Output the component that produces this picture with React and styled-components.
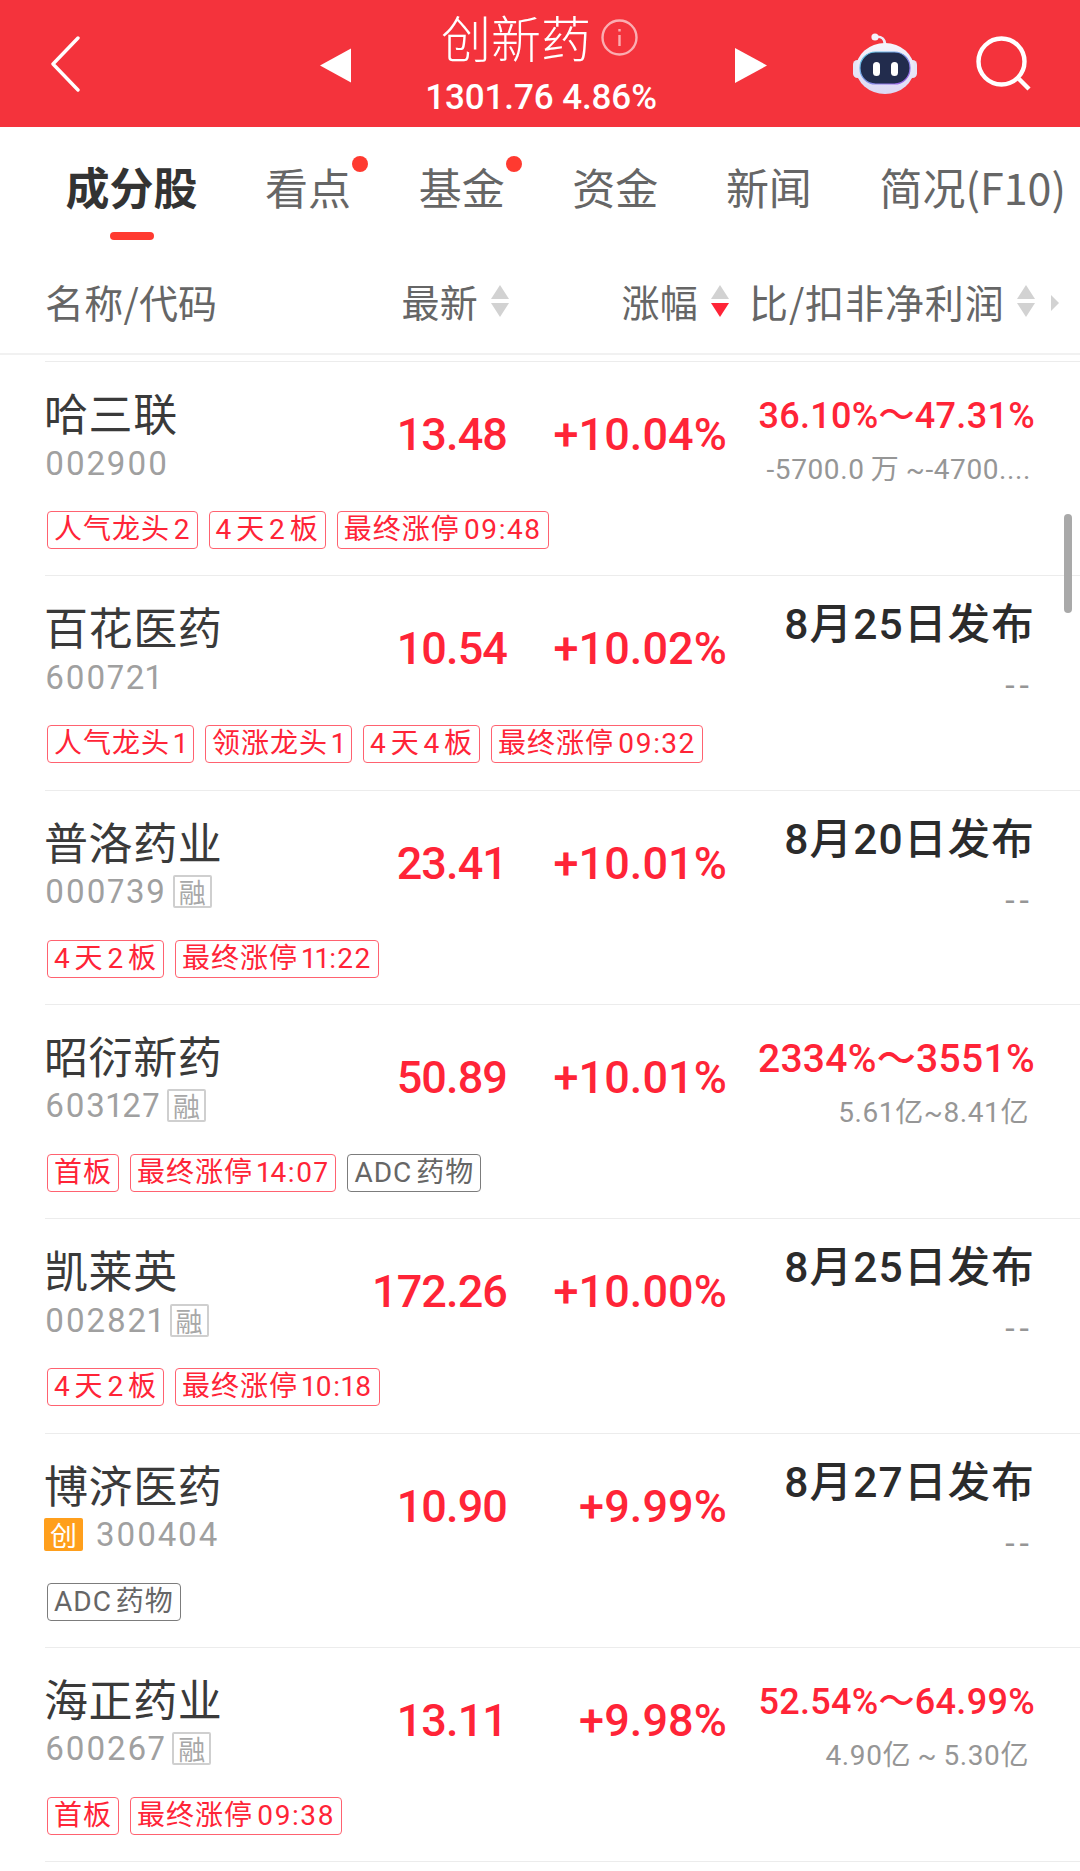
import React from "react";
import styled, { createGlobalStyle } from "styled-components";

const RED = "#ff2437";
const CJK = '"Noto Sans CJK SC", sans-serif';
const NUM = `Roboto, ${CJK}`;

const GlobalStyle = createGlobalStyle`
  html, body {
    margin: 0;
    padding: 0;
    background: #fff;
    font-family: ${CJK};
  }
`;

const Page = styled.div`
  position: relative;
  width: 1080px;
  height: 1871px;
  overflow: hidden;
  background: #fff;
`;

const TopBar = styled.header`
  display: grid;
  grid-template-columns: 320px 31px 384px 32px 85px 66px 57px 56px;
  align-items: center;
  height: 127px;
  background: #f4333c;
  color: #fff;
`;

const BackCell = styled.div`
  display: flex;
  padding-left: 50px;
`;

const TriangleCell = styled.div`
  display: flex;
  margin-top: 4px;
`;

const TitleCell = styled.div`
  display: flex;
  flex-direction: column;
  align-items: center;
`;

const TitleLine = styled.div`
  position: relative;
  margin: -2px 54px 14px 0;
  font-size: 50px;
  line-height: 56px;
  font-weight: 300;
`;

const InfoIcon = styled.svg`
  position: absolute;
  left: 160px;
  top: 11px;
`;

const Quote = styled.div`
  margin-right: 4px;
  font-family: ${NUM};
  font-size: 35px;
  line-height: 40px;
  font-weight: 500;
  letter-spacing: -0.1px;
`;

const Tabs = styled.nav`
  display: flex;
  gap: 67.6px;
  height: 118px;
  padding-left: 65.5px;
  box-sizing: border-box;
`;

const Tab = styled.div`
  position: relative;
  padding-top: 31px;
  font-size: ${(p) => (p.$active ? 44 : 43)}px;
  line-height: 56px;
  white-space: nowrap;
  color: ${(p) => (p.$active ? "#333" : "#666")};
  font-weight: ${(p) => (p.$active ? 700 : 400)};
`;

const TabBar = styled.i`
  position: absolute;
  left: 44.5px;
  top: 105px;
  width: 44px;
  height: 8px;
  border-radius: 4px;
  background: #ff3a30;
`;

const TabDot = styled.i`
  position: absolute;
  right: -17px;
  top: 29px;
  width: 16px;
  height: 16px;
  border-radius: 50%;
  background: #ff3a30;
`;

const ColumnHead = styled.div`
  display: grid;
  grid-template-columns: 330px 135px 220px 1fr;
  align-items: center;
  height: 110px;
  padding: 3px 18px 0 45px;
  box-sizing: border-box;
  border-bottom: 2px solid #f1f1f1;
  font-size: 39px;
  color: #666;
`;

const HeadCell = styled.div`
  display: flex;
  align-items: center;
  justify-content: ${(p) => (p.$end ? "flex-end" : "flex-start")};
  gap: ${(p) => (p.$wide ? 11 : 12)}px;
  white-space: nowrap;
  padding-left: ${(p) => (p.$wide ? 19 : 0)}px;
  font-size: ${(p) => (p.$end ? 38 : 39)}px;
  letter-spacing: ${(p) => (p.$wide ? 0.9 : 0.2)}px;
`;

const List = styled.section`
  margin-top: 6px;
  margin-left: 45px;
  border-top: 1px solid #ececec;
`;

const Row = styled.article`
  height: 214.33px;
  box-sizing: border-box;
  padding-top: 25px;
  border-bottom: 1px solid #ececec;
`;

const RowTop = styled.div`
  display: grid;
  grid-template-columns: 292px 170px 221px 307px;
  grid-template-rows: 96px;
  align-items: center;
`;

const NameCell = styled.div`
  display: flex;
  flex-direction: column;
  gap: 6px;
`;

const Name = styled.div`
  margin-left: -1px;
  font-size: 44px;
  line-height: 50px;
  letter-spacing: 0.6px;
  color: #3a3a3a;
`;

const CodeLine = styled.div`
  display: flex;
  align-items: center;
  height: 40px;
  font-family: ${NUM};
  font-size: 33px;
  font-variant-numeric: proportional-nums;
  letter-spacing: 1.6px;
  color: #a0a0a0;
`;

const MarketBadge = styled.span`
  display: inline-flex;
  align-items: center;
  justify-content: center;
  box-sizing: border-box;
  width: 39px;
  height: 33px;
  border-radius: 2px;
  font-family: ${CJK};
  font-size: 27px;
  letter-spacing: 0;
  ${(p) =>
    p.$kind === "chuang"
      ? `
    margin: 0 13px 0 -1px;
    background: #ff9f1c;
    color: #fff;
  `
      : `
    margin-left: 6px;
    border: 2px solid #cfcfcf;
    color: #a8a8a8;
  `}
`;

const Price = styled.div`
  justify-self: end;
  margin-bottom: 1px;
  font-family: ${NUM};
  font-size: 45px;
  font-weight: 500;
  letter-spacing: -0.9px;
  color: ${RED};
`;

const Change = styled(Price)`
  margin-right: 1px;
  letter-spacing: 0.1px;
`;

const Forecast = styled.div`
  display: flex;
  flex-direction: column;
  align-items: flex-end;
  align-self: start;
  font-family: ${NUM};
`;

const Range = styled.div`
  height: 59px;
  margin-top: 4px;
  font-size: ${(p) => p.$size ?? 36}px;
  line-height: 50px;
  font-weight: 500;
  letter-spacing: 0.3px;
  color: ${RED};
  white-space: nowrap;
`;

const PublishDate = styled.div`
  height: 68px;
  margin-top: -4px;
  font-size: 42.5px;
  line-height: 56px;
  font-weight: 500;
  letter-spacing: 1.2px;
  color: #2b2b2b;
  white-space: nowrap;
`;

const SubRange = styled.div`
  margin-right: ${(p) => p.$inset}px;
  font-size: 28px;
  line-height: 40px;
  letter-spacing: 0.6px;
  color: #969696;
  white-space: nowrap;
`;

const NoValue = styled(SubRange)`
  margin-right: 1px;
  font-size: 34px;
  letter-spacing: 5px;
`;

const TagRow = styled.div`
  display: flex;
  gap: 11px;
  margin-top: 28px;
  margin-left: 2px;
`;

const Tag = styled.span`
  display: inline-flex;
  align-items: center;
  box-sizing: border-box;
  height: 38px;
  padding: 0 6px;
  border: 1.5px solid ${(p) => (p.$gray ? "#7c7c7c" : "#ff6270")};
  border-radius: 4px;
  font-family: ${NUM};
  font-size: 28px;
  font-variant-numeric: proportional-nums;
  line-height: 1;
  letter-spacing: 1px;
  white-space: nowrap;
  color: ${(p) => (p.$gray ? "#666" : RED)};
`;

const TagTime = styled.span`
  margin-left: 4px;
  letter-spacing: 1.4px;
`;

const ScrollThumb = styled.div`
  position: absolute;
  left: 1064px;
  top: 514px;
  width: 8px;
  height: 99px;
  border-radius: 4px;
  background: #a9a9a9;
`;

const SmallArrowIcon = styled.svg`
  margin: 5px 0 0 4px;
`;

const ChevronLeft = () => (
  <svg width="30" height="56" viewBox="0 0 30 56" fill="none" stroke="#fff" strokeWidth="3.4" strokeLinecap="round" strokeLinejoin="round">
    <path d="M28 2 L3 28 L28 54" />
  </svg>
);

const Triangle = ({ right }) => (
  <svg width="32" height="35" viewBox="0 0 32 35" fill="#fff">
    <path d={right ? "M0 0 L32 17.5 L0 35Z" : "M32 0 L0 17.5 L32 35Z"} />
  </svg>
);

const Robot = () => (
  <svg width="66" height="62" viewBox="0 0 66 62">
    <defs>
      <linearGradient id="robotShell" x1="0" y1="0" x2="0" y2="1">
        <stop offset="0" stopColor="#f6f5fc" />
        <stop offset="1" stopColor="#dcd8f4" />
      </linearGradient>
      <linearGradient id="robotRim" x1="0" y1="0" x2="1" y2="1">
        <stop offset="0" stopColor="#5fd0e6" />
        <stop offset="1" stopColor="#a05be8" />
      </linearGradient>
    </defs>
    <path d="M23 4 C30 3 33 6 33 12" fill="none" stroke="#eeecf9" strokeWidth="2.6" />
    <circle cx="23" cy="4" r="3.6" fill="#f4f2fb" />
    <rect x="1" y="27" width="9" height="18" rx="4.5" fill="#e6e3f6" />
    <rect x="56" y="27" width="9" height="18" rx="4.5" fill="#e6e3f6" />
    <ellipse cx="33" cy="35.5" rx="29" ry="25.5" fill="url(#robotShell)" />
    <rect x="8" y="19" width="50" height="32" rx="15.5" fill="#222c4d" stroke="url(#robotRim)" strokeWidth="1.2" />
    <rect x="21" y="29" width="7" height="14" rx="3.5" fill="#fff" />
    <rect x="39" y="29" width="7" height="14" rx="3.5" fill="#fff" />
  </svg>
);

const SearchIcon = () => (
  <svg width="56" height="56" viewBox="0 0 56 56" fill="none" stroke="#fff" strokeWidth="4.4">
    <circle cx="26.5" cy="25.5" r="23" />
    <path d="M44 43 L54 53" />
  </svg>
);

const SortArrows = ({ active }) => (
  <svg width="20" height="32" viewBox="0 0 20 32">
    <path d="M10 0 L19 14 L1 14Z" fill="#d2d2d2" />
    <path d="M10 32 L19 18 L1 18Z" fill={active ? RED : "#d2d2d2"} />
  </svg>
);

const SmallArrow = () => (
  <SmallArrowIcon width="8" height="16" viewBox="0 0 8 16">
    <path d="M0 0 L8 8 L0 16Z" fill="#d2d2d2" />
  </SmallArrowIcon>
);

const tabs = [
  { label: "成分股", active: true },
  { label: "看点", dot: true },
  { label: "基金", dot: true },
  { label: "资金" },
  { label: "新闻" },
  { label: "简况(F10)" },
];

const days = (a, b) => `${a}\u200a天\u200a${b}\u200a板`;

const rows = [
  {
    name: "哈三联", code: "002900", price: "13.48", change: "+10.04%",
    range: "36.10%～47.31%", sub: "-5700.0\u2009万\u2009~-4700....", inset: 4,
    tags: ["人气龙头\u200a2", days(4, 2)], time: "09:48",
  },
  {
    name: "百花医药", code: "600721", price: "10.54", change: "+10.02%",
    date: "8月25日发布",
    tags: ["人气龙头\u200a1", "领涨龙头\u200a1", days(4, 4)], time: "09:32",
  },
  {
    name: "普洛药业", code: "000739", badge: "rong", price: "23.41", change: "+10.01%",
    date: "8月20日发布",
    tags: [days(4, 2)], time: "11:22",
  },
  {
    name: "昭衍新药", code: "603127", badge: "rong", price: "50.89", change: "+10.01%",
    range: "2334%～3551%", rangeSize: 39, sub: "5.61亿~8.41亿", inset: 6,
    tags: ["首板"], time: "14:07", gray: "ADC\u200a药物",
  },
  {
    name: "凯莱英", code: "002821", badge: "rong", price: "172.26", change: "+10.00%",
    date: "8月25日发布",
    tags: [days(4, 2)], time: "10:18",
  },
  {
    name: "博济医药", code: "300404", badge: "chuang", price: "10.90", change: "+9.99%",
    date: "8月27日发布",
    tags: [], gray: "ADC\u200a药物",
  },
  {
    name: "海正药业", code: "600267", badge: "rong", price: "13.11", change: "+9.98%",
    range: "52.54%～64.99%", sub: "4.90亿\u2009~\u20095.30亿", inset: 6,
    tags: ["首板"], time: "09:38",
  },
];

const StockRow = ({ stock }) => (
  <Row>
    <RowTop>
      <NameCell>
        <Name>{stock.name}</Name>
        <CodeLine>
          {stock.badge === "chuang" && <MarketBadge $kind="chuang">创</MarketBadge>}
          {stock.code}
          {stock.badge === "rong" && <MarketBadge $kind="rong">融</MarketBadge>}
        </CodeLine>
      </NameCell>
      <Price>{stock.price}</Price>
      <Change>{stock.change}</Change>
      <Forecast>
        {stock.date ? (
          <PublishDate>{stock.date}</PublishDate>
        ) : (
          <Range $size={stock.rangeSize}>{stock.range}</Range>
        )}
        {stock.sub ? <SubRange $inset={stock.inset}>{stock.sub}</SubRange> : <NoValue>--</NoValue>}
      </Forecast>
    </RowTop>
    <TagRow>
      {stock.tags.map((tag) => (
        <Tag key={tag}>{tag}</Tag>
      ))}
      {stock.time && (
        <Tag>
          最终涨停<TagTime>{stock.time}</TagTime>
        </Tag>
      )}
      {stock.gray && <Tag $gray>{stock.gray}</Tag>}
    </TagRow>
  </Row>
);

export default function App() {
  return (
    <Page>
      <GlobalStyle />
      <TopBar>
        <BackCell><ChevronLeft /></BackCell>
        <TriangleCell><Triangle /></TriangleCell>
        <TitleCell>
          <TitleLine>
            创新药
            <InfoIcon width="37" height="37" viewBox="0 0 37 37" fill="none" stroke="#fff" strokeOpacity="0.6" strokeWidth="2.4">
              <circle cx="18.5" cy="18.5" r="17" />
              <path d="M18.5 16 V27 M18.5 10 V12.5" />
            </InfoIcon>
          </TitleLine>
          <Quote>1301.76 4.86%</Quote>
        </TitleCell>
        <TriangleCell><Triangle right /></TriangleCell>
        <span />
        <Robot />
        <span />
        <SearchIcon />
      </TopBar>

      <Tabs>
        {tabs.map((tab) => (
          <Tab key={tab.label} $active={tab.active}>
            {tab.label}
            {tab.active && <TabBar />}
            {tab.dot && <TabDot />}
          </Tab>
        ))}
      </Tabs>

      <ColumnHead>
        <HeadCell>名称/代码</HeadCell>
        <HeadCell $end>最新<SortArrows /></HeadCell>
        <HeadCell $end>涨幅<SortArrows active /></HeadCell>
        <HeadCell $wide>比/扣非净利润<SortArrows /><SmallArrow /></HeadCell>
      </ColumnHead>

      <List>
        {rows.map((stock) => (
          <StockRow key={stock.code} stock={stock} />
        ))}
      </List>

      <ScrollThumb />
    </Page>
  );
}
